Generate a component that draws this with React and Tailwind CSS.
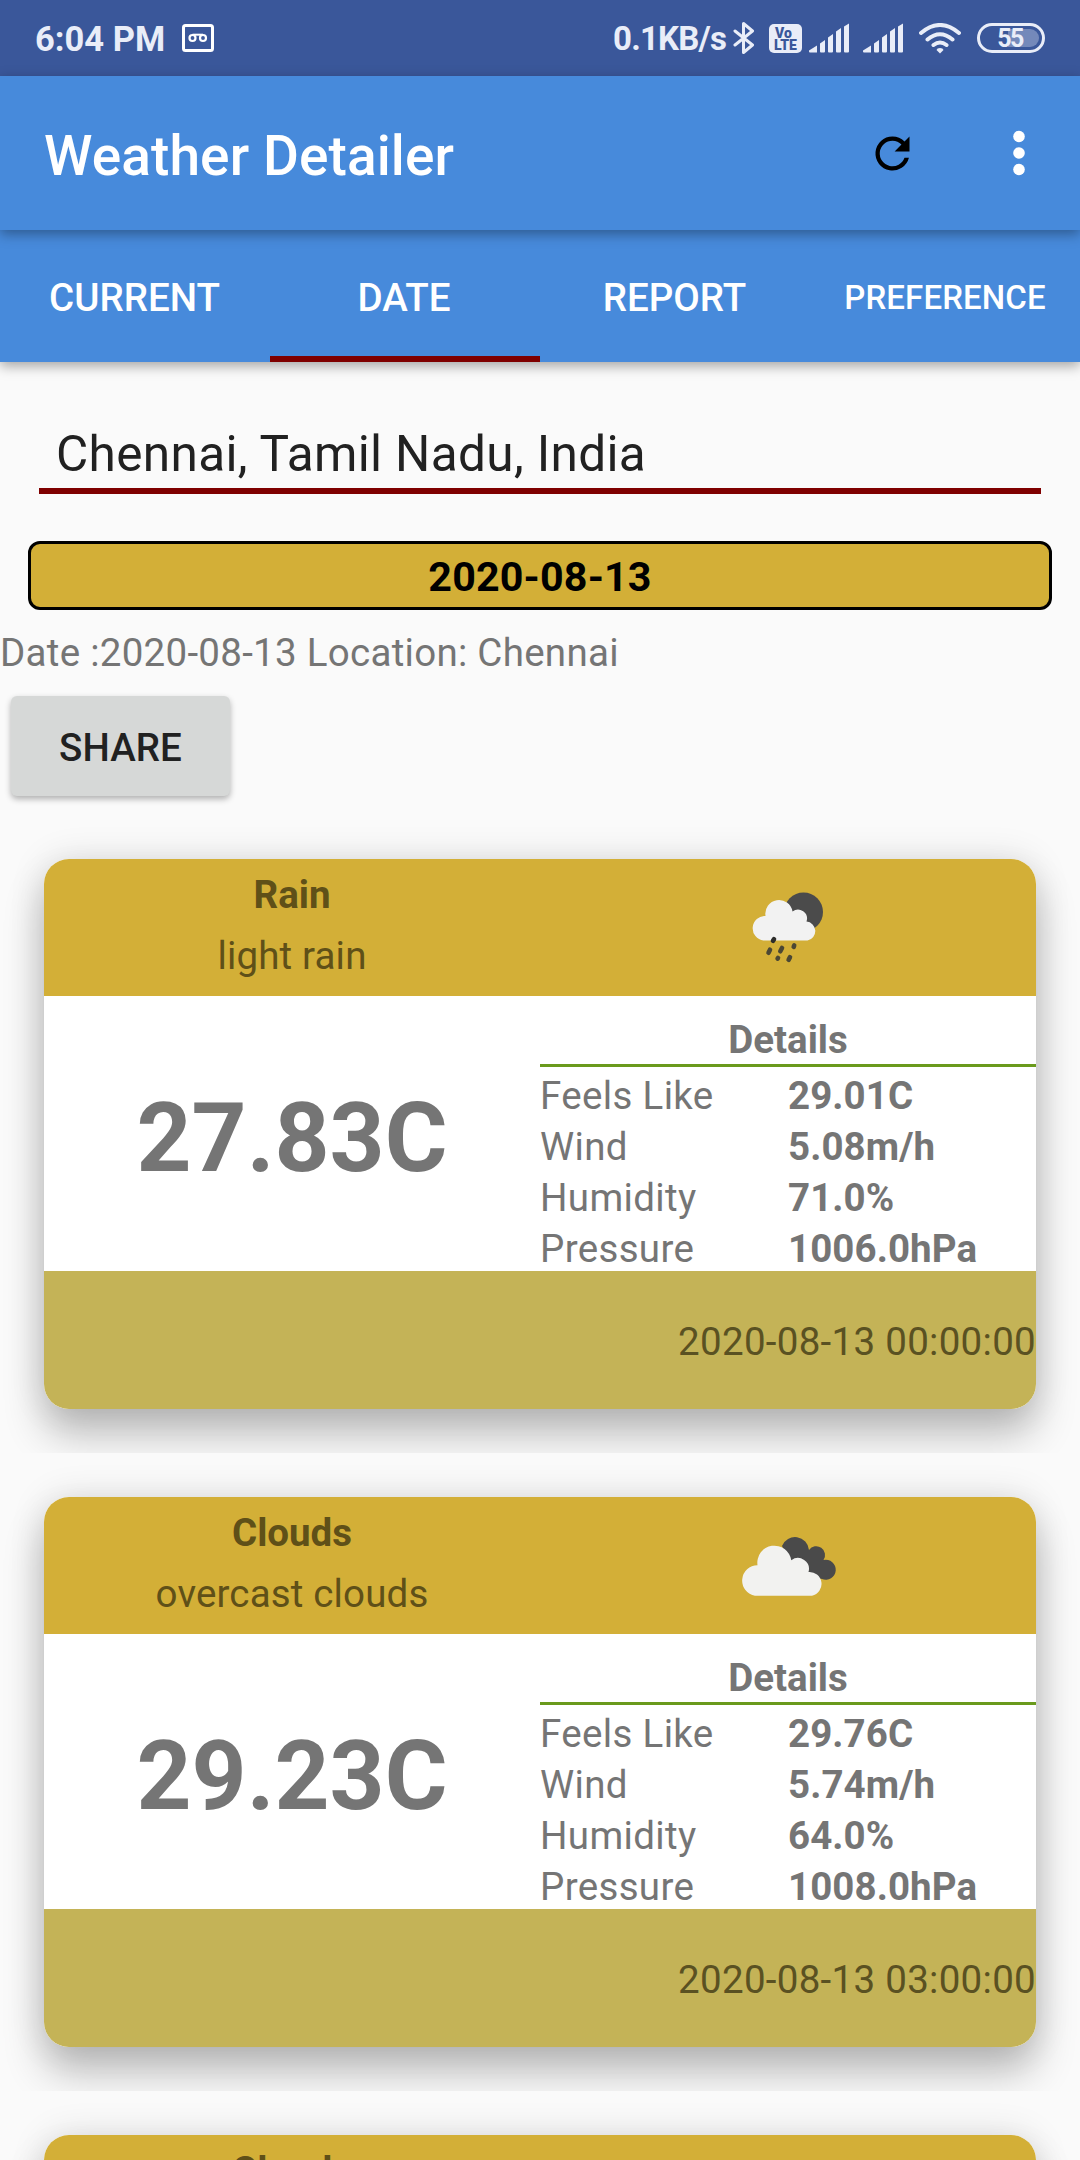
import React from "react";

function RainIcon() {
  return (
    <svg className="h-[140px] w-[200px] shrink-0" viewBox="0 0 200 140">
      <circle cx="104.5" cy="52" r="19.5" fill="#4b4b4b" />
      <path d="M64.500 80.500A12.300 12.300 0 0 1 66.500 56A13.500 13.500 0 0 1 93.500 51.500A9 9 0 0 1 107.500 61.500A9.600 9.600 0 0 1 108.500 80.500Z" fill="#f2f2f2" />
      <g stroke="#4b4734" strokeWidth="4.600" strokeLinecap="round">
        <path d="M75 79.200L74 80.800" stroke="#2d2d2b" />
        <path d="M71 89.700L69.500 92.800M83 88L81.300 91.300M95.200 85.500L94.700 86.800M79 98L78.600 98.600M91 97.200L89.600 99.800" />
      </g>
    </svg>
  );
}

function CloudsIcon() {
  return (
    <svg className="h-[140px] w-[200px] shrink-0" viewBox="0 -2 200 140">
      <path d="M83 46A14 14 0 0 1 110 50A8.700 8.700 0 0 1 124.500 60A10 10 0 1 1 123 79L96 72Z" fill="#4a4a4a" />
      <path d="M56 95.700A15.300 15.300 0 0 1 58.500 65.300A17 17 0 0 1 92.300 60.200A11 11 0 0 1 109.500 72A12 12 0 0 1 113 95.700Z" fill="#f2f2f0" />
    </svg>
  );
}

function Signal() {
  return (
    <svg className="h-[30px] w-[42px] shrink-0" viewBox="0 0 42 30" fill="#e9edf8">
      <path d="M1 29.500Q0 29.500 0 28.500V27.500L8 22.500V29.500ZM11 20.500L16 17V28.500Q16 29.500 15 29.500H12Q11 29.500 11 28.500ZM19 14.500L24 11V28.500Q24 29.500 23 29.500H20Q19 29.500 19 28.500ZM27 8.500L32 5V28.500Q32 29.500 31 29.500H28Q27 29.500 27 28.500ZM35 3.500L40 0.500V28.500Q40 29.500 39 29.500H36Q35 29.500 35 28.500Z" />
    </svg>
  );
}

function StatusBar() {
  return (
    <header className="flex h-[76px] items-center bg-[#3a579a] text-[#e9edf8]">
      <span className="ml-[35px] w-[147px] whitespace-nowrap pt-[2px] text-[34.500px] leading-[40px] font-bold">6:04 PM</span>
      <svg className="h-[28px] w-[32px] shrink-0" viewBox="0 0 32 28" fill="none" stroke="#fff">
        <rect x="1.500" y="1.500" width="29" height="25" rx="2" strokeWidth="3" />
        <circle cx="10.500" cy="14" r="3" strokeWidth="2.200" />
        <circle cx="21" cy="14" r="3" strokeWidth="2.200" />
        <path d="M10.500 10.700H21" strokeWidth="2" />
      </svg>
      <span className="ml-[399px] w-[120px] shrink-0 whitespace-nowrap pt-[2px] text-[33px] leading-[40px] font-bold tracking-[-0.800px]">0.1KB/s</span>
      <svg className="h-[34px] w-[22px] shrink-0" viewBox="0 0 22 34" fill="none" stroke="#e9edf8" strokeWidth="3" strokeLinejoin="round" strokeLinecap="round">
        <path d="M2 10L19.500 24L10.500 31.500V2.500L19.500 10L2 24" />
      </svg>
      <span className="ml-[14px] flex h-[29px] w-[33px] shrink-0 flex-col items-center justify-center rounded-[5px] bg-[#e9edf8] pt-[1px] text-[14px] leading-[12px] font-black text-[#3a579a]">
        <span className="mr-[4px]">Vo</span>
        <span>LTE</span>
      </span>
      <span className="ml-[7px] flex gap-[12px]">
        <Signal />
        <Signal />
      </span>
      <svg className="ml-[14px] h-[31px] w-[42px] shrink-0" viewBox="0 0 42 31" fill="none" stroke="#e9edf8" strokeWidth="4" strokeLinecap="round">
        <path d="M2 10Q21 -6 40 10M8.500 16.500Q21 6 33.500 16.500M14.500 22Q21 17 27.500 22" />
        <path d="M21 25Q24 25 24.500 27L21 30.500L17.500 27Q18 25 21 25Z" fill="#e9edf8" stroke="none" />
      </svg>
      <span className="ml-[16px] flex h-[30px] w-[68px] shrink-0 rounded-full border-[3px] border-[#e9edf8] p-[3px]">
        <span className="flex w-full items-center justify-center rounded-full bg-linear-to-r from-transparent from-45% to-[#7489ba] to-45% pt-[1px] pr-[2px] text-[25px] leading-[20px] font-bold tracking-[-1.500px]">55</span>
      </span>
    </header>
  );
}

function AppBar() {
  return (
    <div className="relative z-20 flex h-[154px] items-center bg-[#478adb] text-white shadow-[0_4px_12px_rgba(0,0,0,0.35)]">
      <h1 className="ml-[44px] flex-1 pt-[5px] text-[55px] leading-[64px] font-medium tracking-[0.1px]">Weather Detailer</h1>
      <svg className="mr-[95px] h-[51px] w-[51px]" viewBox="0 0 24 24" fill="#000">
        <path d="M17.650 6.350A7.958 7.958 0 0 0 12 4a8 8 0 1 0 7.730 10h-2.080A6 6 0 1 1 12 6c1.660 0 3.140.690 4.220 1.780L13 11h7V4z" />
      </svg>
      <svg className="mr-[55px] h-[46px] w-[12px]" viewBox="0 0 12 46" fill="#fff">
        <circle cx="6" cy="6.500" r="5.800" />
        <circle cx="6" cy="23" r="5.800" />
        <circle cx="6" cy="39.500" r="5.800" />
      </svg>
    </div>
  );
}

function Tabs() {
  return (
    <nav className="relative z-10 grid h-[132px] grid-cols-4 grid-rows-[132px] bg-[#478adb] text-center text-[38.500px] leading-[136px] font-medium text-white shadow-[0_4px_12px_rgba(0,0,0,0.35)]">
      <span className="pr-[1px]">CURRENT</span>
      <span className="h-[132px] border-b-[6px] border-[#7f0000] pr-[2px]">DATE</span>
      <span className="pr-[1px]">REPORT</span>
      <span className="text-[33px] tracking-[0.1px]">PREFERENCE</span>
    </nav>
  );
}

function WeatherCard({ title, description, icon, temp, details, time }) {
  return (
    <section className="h-[638px] shrink-0 overflow-hidden px-[44px] pt-[44px]">
      <div className="rounded-[25px] shadow-[0_26px_40px_rgba(0,0,0,0.24),0_0_36px_rgba(0,0,0,0.12)]">
        <div className="flex h-[550px] flex-col overflow-hidden rounded-[25px] bg-white text-[38.500px] text-[#757575]">
          <div className="grid h-[137px] shrink-0 grid-cols-2 bg-[#d3af37] text-center text-[#5f5018]">
            <div className="pt-[10px]">
              <div className="h-[61px] leading-[51px] font-bold">{title}</div>
              <div className="leading-[51px] tracking-[0.004em]">{description}</div>
            </div>
            <div className="flex h-[137px] items-start justify-center pt-[1px] pl-[22px]">{icon}</div>
          </div>
          {details && (
            <>
              <div className="grid h-[275px] shrink-0 grid-cols-2">
                <div className="pt-[5px] text-center text-[96px] leading-[275px] font-bold">{temp}</div>
                <div className="pt-[18px]">
                  <div className="h-[53px] border-b-[3px] border-[#6a9a1c] text-center leading-[51px] font-bold">Details</div>
                  <div className="pt-[3px]">
                    {details.map(([label, value]) => (
                      <div key={label} className="grid h-[51px] grid-cols-2 leading-[51px]">
                        <span className="tracking-[0.009em]">{label}</span>
                        <span className="font-bold tracking-[0.002em]">{value}</span>
                      </div>
                    ))}
                  </div>
                </div>
              </div>
              <div className="h-[138px] bg-[#c4b357] text-right leading-[142px] tracking-[0.0075em] text-[#5a5122]">{time}</div>
            </>
          )}
        </div>
      </div>
    </section>
  );
}

const cards = [
  {
    title: "Rain",
    description: "light rain",
    icon: <RainIcon />,
    temp: "27.83C",
    details: [["Feels Like", "29.01C"], ["Wind", "5.08m/h"], ["Humidity", "71.0%"], ["Pressure", "1006.0hPa"]],
    time: "2020-08-13 00:00:00",
  },
  {
    title: "Clouds",
    description: "overcast clouds",
    icon: <CloudsIcon />,
    temp: "29.23C",
    details: [["Feels Like", "29.76C"], ["Wind", "5.74m/h"], ["Humidity", "64.0%"], ["Pressure", "1008.0hPa"]],
    time: "2020-08-13 03:00:00",
  },
  { title: "Clouds" },
];

export default function App() {
  return (
    <div className="flex h-[2160px] w-[1080px] flex-col overflow-hidden bg-[#fafafa] font-[Roboto,sans-serif]">
      <StatusBar />
      <AppBar />
      <Tabs />
      <main className="flex flex-1 flex-col overflow-hidden">
        <div className="mx-[39px] mt-[62px] h-[70px] shrink-0 border-b-[6px] border-[#7f0000] pl-[17px] text-[49.500px] leading-[60px] tracking-[0.007em] text-[#212121]">
          Chennai, Tamil Nadu, India
        </div>
        <div className="mx-[28px] mt-[47px] h-[69px] shrink-0 rounded-[12px] border-[3px] border-black bg-[#d3af37] text-center text-[41.250px] leading-[66px] font-bold tracking-[0.15px] text-black">
          2020-08-13
        </div>
        <div className="mt-[17px] h-[51px] shrink-0 text-[38.500px] leading-[51px] tracking-[0.0072em] text-[#757575]">
          Date :2020-08-13 Location: Chennai
        </div>
        <button className="mt-[18px] mb-[19px] ml-[11px] h-[100px] w-[219px] shrink-0 rounded-[6px] bg-[#d6d8d7] pt-[3px] text-[38.500px] font-medium tracking-[0.1px] text-[#212121] shadow-[0_3px_6px_rgba(0,0,0,0.3)]">
          SHARE
        </button>
        {cards.map((card, i) => (
          <WeatherCard key={i} {...card} />
        ))}
      </main>
    </div>
  );
}
